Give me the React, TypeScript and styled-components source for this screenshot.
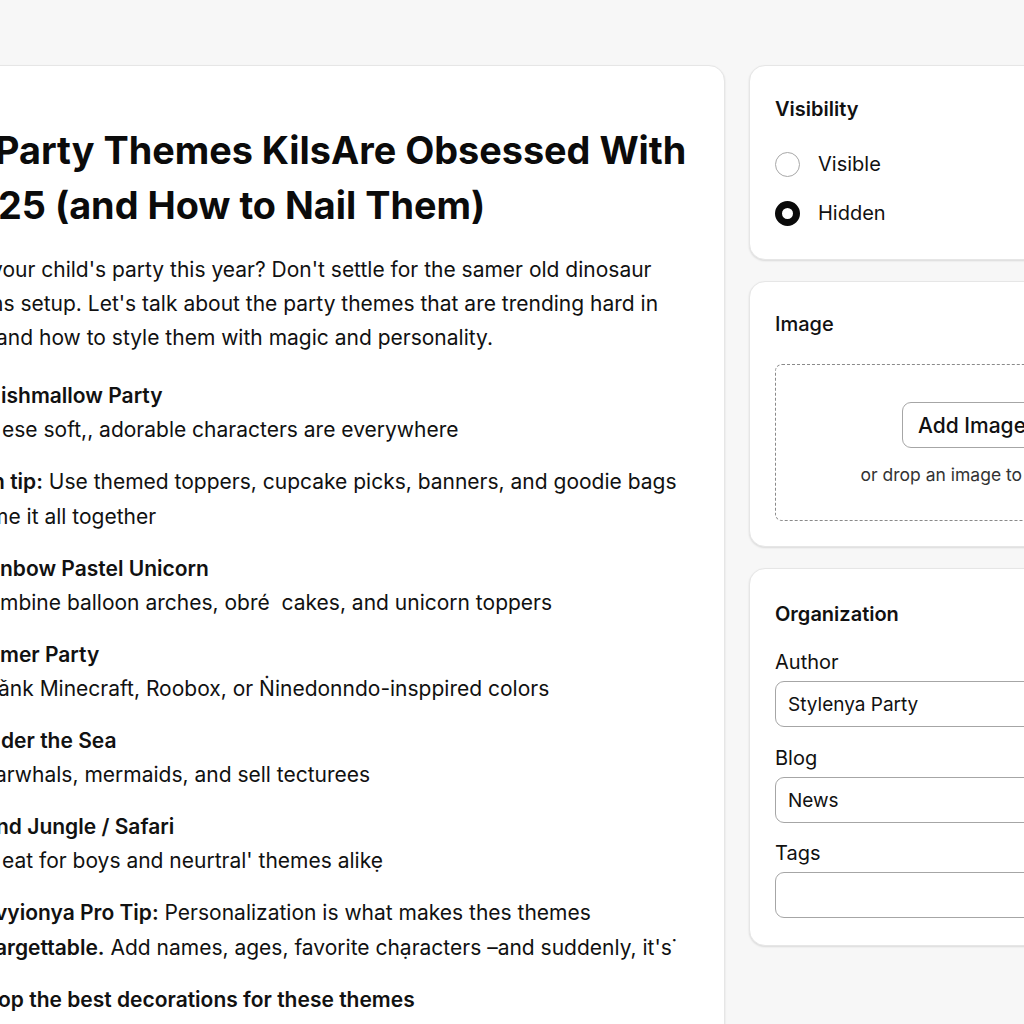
import React from "react";
import styled, { createGlobalStyle } from "styled-components";

const Global = createGlobalStyle`
  html, body { margin: 0; padding: 0; }
  body {
    background: #f7f7f7;
    font-family: Inter, "Noto Sans", "Liberation Sans", sans-serif;
    color: #111;
    overflow: hidden;
    width: 1024px;
    height: 1024px;
  }
  #root { width: 1024px; height: 1024px; overflow: hidden; }
`;

const Page = styled.div`
  display: flex;
  align-items: flex-start;
  gap: 24px;
  padding-top: 65px;
  margin-left: -40px;
  width: 1320px;
`;

const Card = styled.section`
  background: #fff;
  border: 1px solid #e6e6e6;
  border-radius: 16px;
  box-shadow: 0 1px 2px rgba(0, 0, 0, 0.12);
  box-sizing: border-box;
`;

const MainCard = styled(Card)`
  flex: 0 0 765px;
  height: 1000px;
  padding: 57px 0 0 40px;
  overflow: hidden;
`;

const Side = styled.aside`
  flex: 0 0 446px;
  display: flex;
  flex-direction: column;
  gap: 21px;
`;

const SideCard = styled(Card)<{ $pad?: string }>`
  padding: ${(p) => p.$pad || "26px 25px 30px"};
`;

const Title = styled.h1`
  margin: 0 0 20px;
  font-size: 37.8px;
  font-weight: 700;
  line-height: 55px;
  letter-spacing: 0;
  color: #0b0b0b;
`;

const Line = styled.div<{ $shift?: number; $bold?: boolean }>`
  white-space: nowrap;
  font-size: 21px;
  line-height: 34.1px;
  font-weight: ${(p) => (p.$bold ? 600 : 400)};
  margin-left: ${(p) => p.$shift || 0}px;
  color: #111;
`;

const TitleLine = styled.div<{ $shift?: number }>`
  white-space: nowrap;
  margin-left: ${(p) => p.$shift || 0}px;
`;

const Intro = styled.div`
  margin-bottom: 24px;
`;

const Blocks = styled.div`
  display: flex;
  flex-direction: column;
  gap: 18px;
`;

const B = styled.b`
  font-weight: 600;
`;

const CardTitle = styled.h2<{ $weight?: number }>`
  margin: 0;
  font-size: 20px;
  line-height: 36px;
  font-weight: ${(p) => p.$weight || 600};
  color: #111;
`;

const RadioList = styled.div`
  display: flex;
  flex-direction: column;
  gap: 13px;
  margin-top: 19px;
`;

const RadioRow = styled.label`
  display: flex;
  align-items: center;
  gap: 18px;
  font-size: 20px;
  line-height: 36px;
  color: #111;
`;

const RadioDot = styled.span<{ $checked?: boolean }>`
  width: 25px;
  height: 25px;
  border-radius: 50%;
  box-sizing: border-box;
  background: #fff;
  border: ${(p) => (p.$checked ? "7px solid #0a0a0a" : "1px solid #a8a8a8")};
  flex: 0 0 auto;
`;

const Drop = styled.div`
  margin-top: 22px;
  height: 157px;
  border: 1px dashed #8a8a8a;
  border-radius: 7px;
  box-sizing: border-box;
  display: flex;
  flex-direction: column;
  align-items: center;
  justify-content: center;
  gap: 16px;
  padding-top: 2px;
`;

const AddButton = styled.button`
  font-family: inherit;
  font-size: 21px;
  font-weight: 500;
  color: #111;
  background: #fff;
  border: 1px solid #a6a6a6;
  border-radius: 9px;
  height: 46px;
  padding: 0 15px;
`;

const DropHint = styled.div`
  font-size: 17.5px;
  color: #333;
`;

const Field = styled.div<{ $top?: number }>`
  display: flex;
  flex-direction: column;
  gap: 5px;
  margin-top: ${(p) => p.$top ?? 17}px;
`;

const Label = styled.div`
  font-size: 20px;
  line-height: 28px;
  color: #111;
`;

const Input = styled.div`
  height: 46px;
  box-sizing: border-box;
  border: 1px solid #a6a6a6;
  border-radius: 9px;
  padding: 0 12px;
  display: flex;
  align-items: center;
  font-size: 19px;
  color: #111;
`;

export default function App() {
  return (
    <>
      <Global />
      <Page>
        <MainCard>
          <Title>
            <TitleLine $shift={-6}>Party Themes KilsAre Obsessed With</TitleLine>
            <TitleLine $shift={-3}>25 (and How to Nail Them)</TitleLine>
          </Title>
          <Intro>
            <Line $shift={-10}>your child's party this year? Don't settle for the samer old dinosaur</Line>
            <Line $shift={-10}>ns setup. Let's talk about the party themes that are trending hard in</Line>
            <Line $shift={-5}>and how to style them with magic and personality.</Line>
          </Intro>
          <Blocks>
            <div>
              <Line $bold>ishmallow Party</Line>
              <Line $shift={1}>ese soft,, adorable characters are everywhere</Line>
            </div>
            <div>
              <Line $shift={-9}>
                <B>n tip:</B> Use themed toppers, cupcake picks, banners, and goodie bags
              </Line>
              <Line $shift={-11}>me it all together</Line>
            </div>
            <div>
              <Line $bold $shift={-1}>nbow Pastel Unicorn</Line>
              <Line $shift={-1}>mbine balloon arches, obré&nbsp; cakes, and unicorn toppers</Line>
            </div>
            <div>
              <Line $bold $shift={-1}>mer Party</Line>
              <Line $shift={-3}>ǎnk Minecraft, Roobox, or Ṅinedonndo-insppired colors</Line>
            </div>
            <div>
              <Line $bold $shift={0}>der the Sea</Line>
              <Line $shift={-6}>arwhals, mermaids, and sell tecturees</Line>
            </div>
            <div>
              <Line $bold $shift={-5}>nd Jungle / Safari</Line>
              <Line $shift={1}>eat for boys and neurtral' themes alikẹ</Line>
            </div>
            <div>
              <Line $shift={-6}>
                <B>vyionya Pro Tip:</B> Personalization is what makes thes themes
              </Line>
              <Line $shift={-6}>
                <B>argettable.</B> Add names, ages, favorite chạracters –and suddenly, it's˙
              </Line>
            </div>
            <div>
              <Line $bold $shift={-3}>op the best decorations for these themes</Line>
            </div>
          </Blocks>
        </MainCard>
        <Side>
          <SideCard $pad="25px 25px 28px">
            <CardTitle>Visibility</CardTitle>
            <RadioList>
              <RadioRow>
                <RadioDot />
                Visible
              </RadioRow>
              <RadioRow>
                <RadioDot $checked />
                Hidden
              </RadioRow>
            </RadioList>
          </SideCard>
          <SideCard $pad="24px 25px 25px">
            <CardTitle $weight={500}>Image</CardTitle>
            <Drop>
              <AddButton>Add Image</AddButton>
              <DropHint>or drop an image to upload</DropHint>
            </Drop>
          </SideCard>
          <SideCard $pad="27px 25px 27px">
            <CardTitle>Organization</CardTitle>
            <Field $top={16}>
              <Label>Author</Label>
              <Input>Stylenya Party</Input>
            </Field>
            <Field>
              <Label>Blog</Label>
              <Input>News</Input>
            </Field>
            <Field $top={16}>
              <Label>Tags</Label>
              <Input />
            </Field>
          </SideCard>
        </Side>
      </Page>
    </>
  );
}
